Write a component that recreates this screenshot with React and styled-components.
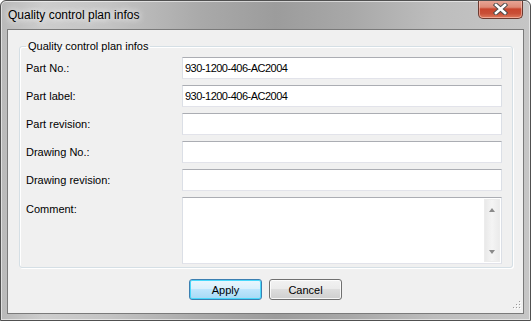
import styled, { createGlobalStyle } from "styled-components";

const GlobalStyle = createGlobalStyle`
  html, body {
    margin: 0;
    padding: 0;
    background: #ffffff;
  }
  body {
    font-family: "Liberation Sans", Arial, sans-serif;
  }
`;

const fields = [
  { label: "Part No.:", value: "930-1200-406-AC2004" },
  { label: "Part label:", value: "930-1200-406-AC2004" },
  { label: "Part revision:", value: "" },
  { label: "Drawing No.:", value: "" },
  { label: "Drawing revision:", value: "" },
];

export default function App() {
  return (
    <>
      <GlobalStyle />
      <Window>
        <TitleBar>
          <Title>Quality control plan infos</Title>
          <CloseButton>
            <svg width="15" height="12" viewBox="0 0 15 12">
              <path
                d="M3 2 L12 10 M12 2 L3 10"
                stroke="#4a4a4a"
                strokeWidth="4.4"
                strokeLinecap="square"
              />
              <path
                d="M3 2 L12 10 M12 2 L3 10"
                stroke="#ffffff"
                strokeWidth="2.6"
                strokeLinecap="square"
              />
            </svg>
          </CloseButton>
        </TitleBar>
        <Client>
          <Group>
            <Legend>Quality control plan infos</Legend>
            <Form>
              {fields.map((field) => (
                <Row key={field.label}>
                  <Label>{field.label}</Label>
                  <TextBox defaultValue={field.value} />
                </Row>
              ))}
              <Row>
                <Label $top>Comment:</Label>
                <CommentBox>
                  <CommentArea />
                  <ScrollBar>
                    <Arrow $up />
                    <Arrow />
                  </ScrollBar>
                </CommentBox>
              </Row>
            </Form>
          </Group>
          <ButtonRow>
            <Button $default>Apply</Button>
            <Button>Cancel</Button>
          </ButtonRow>
          <Grip>
            <svg width="10" height="10" viewBox="0 0 10 10">
              {[
                [8, 0],
                [8, 3],
                [5, 3],
                [8, 6],
                [5, 6],
                [2, 6],
              ].map(([x, y]) => (
                <g key={`${x}-${y}`}>
                  <rect x={x + 1} y={y + 1} width="1" height="1" fill="#ffffff" />
                  <rect x={x} y={y} width="1" height="1" fill="#9a9a9a" />
                </g>
              ))}
            </svg>
          </Grip>
        </Client>
      </Window>
    </>
  );
}

const Window = styled.div`
  width: 531px;
  height: 321px;
  box-sizing: border-box;
  display: flex;
  flex-direction: column;
  border: 1px solid #505050;
  border-radius: 6px 6px 0 0;
  background: linear-gradient(
    90deg,
    #b9b9b9 0%,
    #cdcdcd 8%,
    #c4c4c4 20%,
    #a9a9a9 38%,
    #9c9c9c 52%,
    #a8a8a8 66%,
    #bdbdbd 82%,
    #c6c6c6 100%
  );
  box-shadow: inset 0 0 0 1px rgba(255, 255, 255, 0.55);
  overflow: hidden;
`;

const TitleBar = styled.div`
  height: 28px;
  display: flex;
  align-items: flex-start;
  padding-left: 7px;
`;

const Title = styled.span`
  margin-top: 7px;
  font-family: "Liberation Sans", Arial, sans-serif;
  font-size: 12px;
  line-height: 15px;
  color: #000000;
  text-shadow: 0 0 6px rgba(255, 255, 255, 0.95), 0 0 10px rgba(255, 255, 255, 0.8);
`;

const CloseButton = styled.div`
  margin-left: auto;
  margin-right: 7px;
  margin-top: -1px;
  width: 45px;
  height: 19px;
  box-sizing: border-box;
  border: 1px solid #6b3a30;
  border-top: none;
  border-radius: 0 0 5px 5px;
  background: linear-gradient(
    180deg,
    #e9a899 0%,
    #dd8a76 40%,
    #c8452d 50%,
    #c94f37 75%,
    #de7a5c 100%
  );
  box-shadow: inset 0 0 0 1px rgba(255, 210, 200, 0.55);
  display: flex;
  align-items: center;
  justify-content: center;
`;

const Client = styled.div`
  position: relative;
  flex: 1;
  margin: 0 6px 6px 6px;
  border: 1px solid #7a7a7a;
  background: #f0f0f0;
  display: flex;
  flex-direction: column;
  padding: 10px 10px 0 11px;
`;

const Group = styled.fieldset`
  margin: 0;
  padding: 4px 10px 3px 6px;
  border: 1px solid #d5dfe5;
  border-radius: 3px;
  box-shadow: inset 1px 1px 0 #ffffff, 1px 1px 0 #ffffff;
  min-width: 0;
`;

const Legend = styled.legend`
  padding: 0 2px;
  font-size: 11px;
  line-height: 13px;
  color: #000000;
`;

const Form = styled.div`
  display: flex;
  flex-direction: column;
  gap: 6px;
`;

const Row = styled.div`
  display: grid;
  grid-template-columns: 156px 320px;
  align-items: center;
`;

const Label = styled.span`
  font-size: 11px;
  color: #000000;
  align-self: ${(p) => (p.$top ? "start" : "center")};
  padding-top: ${(p) => (p.$top ? "6px" : "0")};
`;

const TextBox = styled.input`
  box-sizing: border-box;
  height: 22px;
  width: 320px;
  margin: 0;
  padding: 0 2px;
  border: 1px solid #e2e3ea;
  border-top-color: #abadb3;
  border-left-color: #dbdfe6;
  border-right-color: #dbdfe6;
  background: #ffffff;
  font-family: "Liberation Sans", Arial, sans-serif;
  font-size: 11px;
  letter-spacing: -0.5px;
  color: #000000;
  outline: none;
`;

const CommentBox = styled.div`
  box-sizing: border-box;
  height: 67px;
  width: 320px;
  display: flex;
  border: 1px solid #e2e3ea;
  border-top-color: #abadb3;
  border-left-color: #dbdfe6;
  border-right-color: #dbdfe6;
  background: #ffffff;
`;

const CommentArea = styled.textarea`
  flex: 1;
  margin: 0;
  border: none;
  resize: none;
  overflow: hidden;
  outline: none;
  background: transparent;
  font-family: "Liberation Sans", Arial, sans-serif;
  font-size: 11px;
`;

const ScrollBar = styled.div`
  width: 16px;
  margin: 1px 1px 1px 0;
  box-sizing: border-box;
  border: 1px solid #ececec;
  background: linear-gradient(90deg, #e9e9e9, #f4f4f4 50%, #ebebeb);
  display: flex;
  flex-direction: column;
  justify-content: space-between;
  align-items: center;
  padding: 8px 0 7px 0;
`;

const Arrow = styled.div`
  width: 0;
  height: 0;
  border-left: 3.5px solid transparent;
  border-right: 3.5px solid transparent;
  border-bottom: ${(p) => (p.$up ? "4px solid #8a8a8a" : "none")};
  border-top: ${(p) => (p.$up ? "none" : "4px solid #8a8a8a")};
`;

const ButtonRow = styled.div`
  display: flex;
  justify-content: center;
  gap: 7px;
  margin-top: 11px;
  padding-right: 0;
  margin-left: -11px;
  margin-right: -10px;
`;

const Button = styled.button`
  box-sizing: border-box;
  width: 73px;
  height: 21px;
  margin: 0;
  padding: 0;
  border: 1px solid ${(p) => (p.$default ? "#3c7fb1" : "#707070")};
  border-radius: 3px;
  background: ${(p) =>
    p.$default
      ? "linear-gradient(180deg, #eaf6fd 0%, #d9f0fc 45%, #bee6fd 50%, #a7d9f5 100%)"
      : "linear-gradient(180deg, #f2f2f2 0%, #ebebeb 45%, #dddddd 50%, #cfcfcf 100%)"};
  box-shadow: ${(p) =>
    p.$default
      ? "inset 0 0 0 1px #48d8fb"
      : "inset 0 0 0 1px rgba(255, 255, 255, 0.8)"};
  font-family: "Liberation Sans", Arial, sans-serif;
  font-size: 11px;
  color: #000000;
`;

const Grip = styled.div`
  position: absolute;
  right: 2px;
  bottom: 2px;
  width: 10px;
  height: 10px;
  line-height: 0;
`;
